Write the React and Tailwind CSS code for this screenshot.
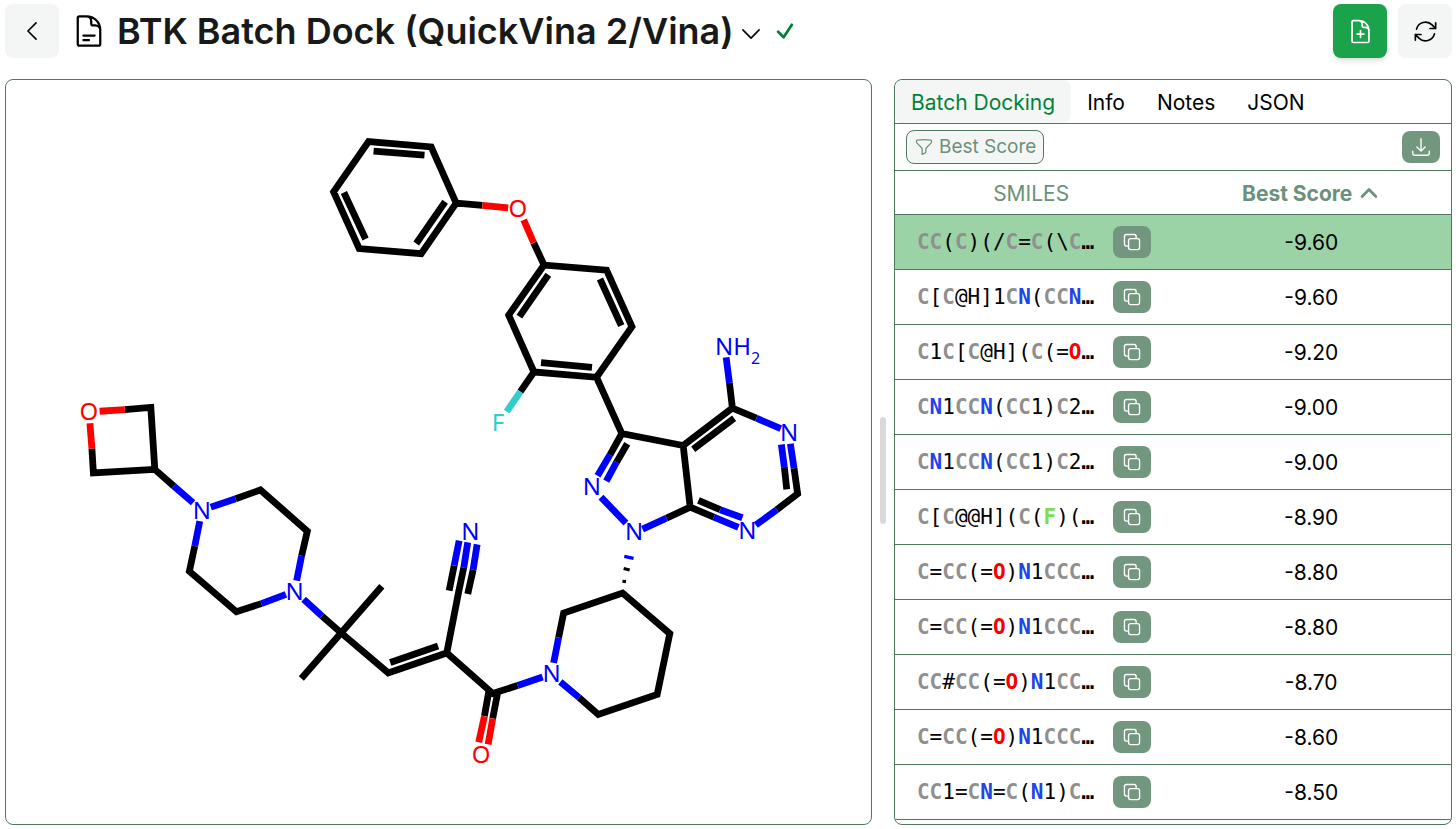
import React, { useState } from 'react';
import {
  HiOutlineArrowDownTray,
  HiOutlineArrowPath,
  HiOutlineCheck,
  HiOutlineChevronDown,
  HiOutlineChevronLeft,
  HiOutlineChevronUp,
  HiOutlineDocumentPlus,
  HiOutlineDocumentText,
  HiOutlineFunnel,
  HiOutlineSquare2Stack,
} from 'react-icons/hi2';

const TABS = ['Batch Docking', 'Info', 'Notes', 'JSON'];

const RESULTS = [
  { smiles: 'CC(C)(/C=C(\\C', score: -9.6 },
  { smiles: 'C[C@H]1CN(CCN', score: -9.6 },
  { smiles: 'C1C[C@H](C(=O', score: -9.2 },
  { smiles: 'CN1CCN(CC1)C2', score: -9.0 },
  { smiles: 'CN1CCN(CC1)C2', score: -9.0 },
  { smiles: 'C[C@@H](C(F)(', score: -8.9 },
  { smiles: 'C=CC(=O)N1CCC', score: -8.8 },
  { smiles: 'C=CC(=O)N1CCC', score: -8.8 },
  { smiles: 'CC#CC(=O)N1CC', score: -8.7 },
  { smiles: 'C=CC(=O)N1CCC', score: -8.6 },
  { smiles: 'CC1=CN=C(N1)C', score: -8.5 },
];

// text colours of the atoms in a SMILES string
const ATOM_CLASS = {
  C: 'font-bold text-[#8f8f8f]',
  N: 'font-bold text-[#2144e8]',
  O: 'font-bold text-[#f60000]',
  F: 'font-bold text-[#7fdc4a]',
};

const BLACK = '#000000';
const BLUE = '#0000ff';
const RED = '#ff0000';
const CYAN = '#33cccc';

// bonds of the molecule, grouped by colour of the half they end in
const BONDS = [
  {
    color: BLACK,
    d: [
      // phenyl
      'M483 204.6L456.7 202.3L431.7 146L369 140.7L334 191L359.6 247.8L421.7 253L456.7 202.3',
      'M374 150.3L425 154.3M445.7 201L416.7 242.7M344.3 191.7L366 238.3',
      // fluorophenyl
      'M534.3 242L544.7 264.3L607.3 269.5L632.7 326L597.3 376.7L534.6 371.4L509.3 314.5L544.7 264.3M534.6 371.4L521 391',
      'M549 274L520 316M600.7 278.3L622 325M541.7 362L592.7 366.7',
      // pyrazolopyrimidine
      'M597.3 376.7L622.6 433L684 445L691 506.7L667.3 517.7M622.6 433L610.7 454.3M628 443.3L617.3 461.7',
      'M684 445L733.3 407.5L730.3 382.3M733.3 407.5L757.3 417.7M735 417.7L694 448.7',
      'M795 467.7L798.6 493.3L777.7 509.3M785.3 466.7L787.7 489M691 506.7L714.7 516.7M699.3 500L721 509.3',
      // piperidine
      'M559.3 637.3L564.3 612.7L623.3 592.7L670.6 633.3L658 694.3L599 714.3L579.7 697.3',
      // amide, alkene and nitrile
      'M518.3 685.3L493.3 693.3L447.3 652.7L388.7 672.7L341.7 632.7L322.3 615.7',
      'M489.3 691.7L485 716M498 694L493.3 718.3M438.6 645.7L390.7 662.3',
      'M447.3 652.7L459.3 591L464.3 567.3M449.7 590.3L454.7 565.3M468.3 593.7L473.7 569.3',
      // methyls
      'M382.3 586L301.7 678.3',
      // piperazine
      'M302 555.3L307.7 530.7L260.7 489.5L236 498.3M195 545.7L189.6 571L236.7 611.4L261.7 603.3',
      // oxetane
      'M174 485.7L155 469L151 406.9L125 409M155 469L93.5 472.5L92 448',
    ],
  },
  {
    color: BLUE,
    d: [
      'M667.3 517.7L643.3 528.7M626.7 522.7L601.7 496.7M610.7 454.3L598.3 475.3M617.3 461.7L607 480.7',
      'M730.3 382.3L727 356.7M757.3 417.7L781.7 428M791.3 443.3L795 467.7M782.3 444L785.3 466.7',
      'M777.7 509.3L756.7 524.7M714.7 516.7L739.3 527M721 509.3L743.3 517.3',
      'M559.3 637.3L554.3 662.7M579.7 697.3L561 681.7M543.3 676.7L518.3 685.3',
      'M464.3 567.3L468.3 542M454.7 565.3L459.7 540.3M473.7 569.3L477.7 544',
      'M322.3 615.7L304 599M297 580.3L302 555.3M236 498.3L211 506.7M200 520.7L195 545.7M261.7 603.3L286.3 594M174 485.7L193.3 502.3',
    ],
  },
  {
    color: RED,
    d: [
      'M483 204.6L508.7 207.2M524.3 219L534.3 242M485 716L479.3 742M493.3 718.3L488.7 744.3',
      'M125 409L99.7 410.7M90 422.7L92 448',
    ],
  },
  { color: CYAN, d: ['M521 391L507.3 411'] },
];

const ATOMS = [
  { label: 'O', x: 518.5, y: 208, color: RED },
  { label: 'F', x: 498.5, y: 422, color: CYAN },
  { label: 'N', x: 635, y: 532, color: BLUE },
  { label: 'N', x: 592.7, y: 487, color: BLUE },
  { label: 'NH', x: 734, y: 346.5, color: BLUE },
  { label: 'N', x: 790, y: 432.5, color: BLUE },
  { label: 'N', x: 748.3, y: 531, color: BLUE },
  { label: 'N', x: 552.3, y: 674, color: BLUE },
  { label: 'O', x: 481.7, y: 755, color: RED },
  { label: 'N', x: 471, y: 532, color: BLUE },
  { label: 'N', x: 295, y: 592, color: BLUE },
  { label: 'N', x: 202, y: 510.5, color: BLUE },
  { label: 'O', x: 89, y: 411.5, color: RED },
];

function Molecule() {
  return (
    <svg viewBox="6 80 866 743" className="h-full w-full" role="img" aria-label="Docked ligand structure">
      {BONDS.map((group) => (
        <path
          key={group.color}
          d={group.d.join('')}
          fill="none"
          stroke={group.color}
          strokeWidth={6.8}
          strokeLinejoin="miter"
        />
      ))}

      {/* hashed stereo bond */}
      <path d="M625 556L634.3 558" stroke={BLUE} strokeWidth={3.2} />
      <path d="M624.4 568.2L630.4 569.6M623.2 580.9L626.7 581.3" stroke={BLACK} strokeWidth={3.2} />

      {ATOMS.map((a) => (
        <text
          key={`${a.x}-${a.y}`}
          x={a.x}
          y={a.y + 8}
          fill={a.color}
          fontSize={24}
          textAnchor="middle"
          className="font-['Noto_Sans',sans-serif]"
        >
          {a.label}
        </text>
      ))}
      <text x={756.5} y={363} fill={BLUE} fontSize={16} textAnchor="middle" className="font-['Noto_Sans',sans-serif]">
        2
      </text>
    </svg>
  );
}

function Smiles({ value }) {
  return (
    <span className="flex-1 whitespace-nowrap font-['DejaVu_Sans_Mono',monospace] text-[21px] leading-8">
      {value.split('').map((ch, i) => (
        <span key={i} className={ATOM_CLASS[ch]}>{ch}</span>
      ))}
      <span className="font-bold">…</span>
    </span>
  );
}

function SmallButton({ label, children }) {
  return (
    <button
      type="button"
      aria-label={label}
      className="flex h-8 w-[38px] shrink-0 items-center justify-center rounded-lg bg-[#73967f] text-white"
    >
      {children}
    </button>
  );
}

const App = () => {
  const [tab, setTab] = useState('Batch Docking');
  const [selected, setSelected] = useState(0);

  return (
    <div className="flex min-h-screen flex-col bg-white py-1 pl-[5px] pr-1 font-['Inter',sans-serif] text-black">
      {/* Header */}
      <header className="mb-[21px] flex items-center">
        <button type="button" aria-label="Back" className="flex size-[54px] items-center justify-center rounded-lg bg-[#f4f6f5]">
          <HiOutlineChevronLeft className="size-[26px]" />
        </button>
        <HiOutlineDocumentText className="ml-3 size-9" />
        <h1 className="ml-2.5 text-4xl font-semibold text-[#171a19]">BTK Batch Dock (QuickVina 2/Vina)</h1>
        <button type="button" aria-label="Rename" className="ml-1 pt-1.5">
          <HiOutlineChevronDown className="size-[26px]" />
        </button>
        <HiOutlineCheck className="ml-2.5 size-[22px] stroke-3 text-green-700" />

        <div className="ml-auto flex gap-[11px]">
          <button type="button" aria-label="New document" className="flex size-[54px] items-center justify-center rounded-lg bg-[#1aa34a] text-white shadow-md">
            <HiOutlineDocumentPlus className="size-[27px]" />
          </button>
          <button type="button" aria-label="Refresh" className="flex size-[54px] items-center justify-center rounded-lg bg-[#f4f6f5]">
            <HiOutlineArrowPath className="size-[27px]" />
          </button>
        </div>
      </header>

      {/* Panels */}
      <main className="flex flex-1">
        <section className="min-w-0 flex-[14] rounded-lg border border-[#4f785f]">
          <Molecule />
        </section>

        <div className="flex w-[22px] shrink-0 items-center justify-center">
          <div className="mt-9 h-[107px] w-[6px] rounded-sm bg-[#d9d9d9]" />
        </div>

        <section className="min-w-0 flex-[9] overflow-hidden rounded-lg border border-[#4f785f]">
          <nav className="flex h-11 border-b border-[#4f785f] text-[21px]">
            {TABS.map((t) => (
              <button
                key={t}
                type="button"
                onClick={() => setTab(t)}
                className={`rounded-lg px-4 pt-0.5 ${tab === t ? 'bg-[#f4f6f5] text-green-700' : 'text-black'}`}
              >
                {t}
              </button>
            ))}
          </nav>

          <div className="flex h-[47px] items-center justify-between border-b border-[#4f785f] px-[11px]">
            <button
              type="button"
              className="flex h-[34px] items-center gap-[5px] rounded-lg border border-[#4f785f] bg-[#f4f6f5] px-[7px] text-[19px] text-[#6b917a]"
            >
              <HiOutlineFunnel className="size-5" />
              Best Score
            </button>
            <SmallButton label="Download">
              <HiOutlineArrowDownTray className="size-[22px]" />
            </SmallButton>
          </div>

          <table className="w-full table-fixed border-collapse text-center text-[21px]">
            <thead>
              <tr className="h-[43px] border-b border-[#4f785f] text-[#6b917a]">
                <th className="w-[49%] pt-0.5 font-normal">SMILES</th>
                <th className="pl-1 pt-0.5 font-bold">
                  <button type="button" className="inline-flex items-center gap-1.5">
                    Best Score
                    <HiOutlineChevronUp className="size-[22px] stroke-3" />
                  </button>
                </th>
              </tr>
            </thead>
            <tbody>
              {RESULTS.map((r, i) => (
                <tr
                  key={i}
                  onClick={() => setSelected(i)}
                  className={`h-[55px] border-b border-[#4f785f] ${selected === i ? 'bg-[#9bd3a7]' : ''}`}
                >
                  <td className="pl-[22px] pr-4">
                    <div className="flex items-center text-left">
                      <Smiles value={r.smiles} />
                      <SmallButton label="Copy SMILES">
                        <HiOutlineSquare2Stack className="size-[22px]" />
                      </SmallButton>
                    </div>
                  </td>
                  <td className="pl-1 pt-0.5">{r.score.toFixed(2)}</td>
                </tr>
              ))}
            </tbody>
          </table>
        </section>
      </main>
    </div>
  );
};

export default App;
